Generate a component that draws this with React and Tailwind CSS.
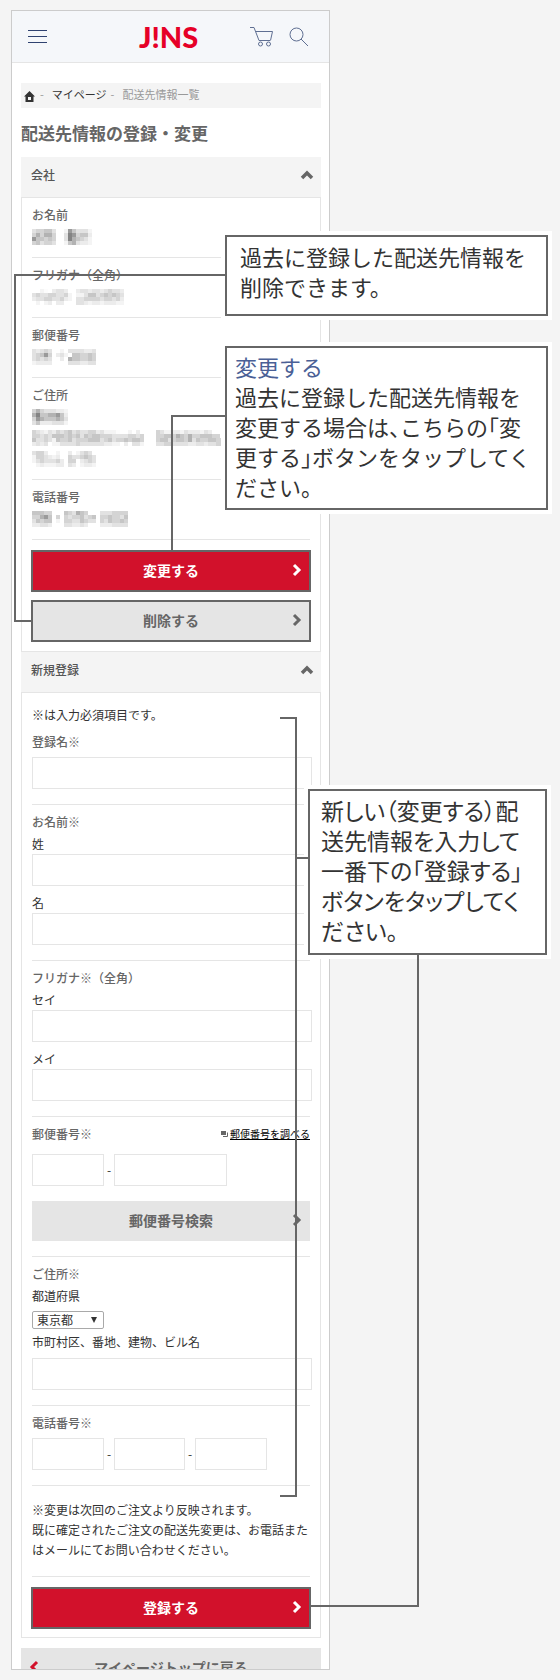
import clsx from "clsx";

// greyed-out personal data, one character per 4px block ("." is empty, 9 is darkest)
const privateRows = [
  { label: "お名前", lines: [["344553..1753331.", "464664..3874552.", "755454..3865431.", "453443..1563221."]] },
  { label: "フリガナ（全角）", lines: [["..10.2332..233233234332", "3433443341.113553454543", "2334433421.334444344342", ".1.12.22...332122122211"]] },
  { label: "郵便番号", lines: [["32343..1.3333223", "34574.231.554454", "34343..2.6554454", "12222....3332233"]] },
  {
    label: "ご住所",
    lines: [
      ["464333221", "685566752", "476555653", "352223331"],
      [
        "4321324345343344231110..1.2....43112213222132...",
        "4434355545453545544433334434...4455465464455544.",
        "5334315445344455534534454554...45534554635445544",
        "2323.11333343333332211.2.331...33443333223323344",
      ],
      ["3442..1..2.1343.", "1443212..4334543", "13433342.44.2343", ".1211122.32.1221"],
    ],
  },
  { label: "電話番号", lines: [["55544...543654...3334444", "44675.4.43445345.4454435", "35455.1.44335433.4354454", "22332...332232...2223333"]] },
];

const greys = ["#fcfcfc", "#f4f4f4", "#ececec", "#e2e2e2", "#d4d4d4", "#c6c6c6", "#b2b2b2", "#9a9a9a", "#848484", "#707070"];

function Mosaic({ rows }) {
  const cols = Math.max(...rows.map((r) => r.length));
  return (
    <svg width={cols * 4} height={16} viewBox={`0 0 ${cols * 4} 16`} shapeRendering="crispEdges" className="shrink-0" aria-hidden="true">
      {rows.map((row, y) =>
        row.split("").map((c, x) =>
          c === "." ? null : <rect key={`${x}-${y}`} x={x * 4} y={y * 4} width="4" height="4" fill={greys[c]} />
        )
      )}
    </svg>
  );
}

function Chevron({ dir = "right", className }) {
  const points = {
    right: "2,2 7,7 2,12",
    left: "8,2 3,7 8,12",
    up: "1,10 6,5 11,10",
  };
  return (
    <svg width={dir === "up" ? 14 : 10} height="14" viewBox={dir === "up" ? "-1 0 14 14" : "0 0 10 14"} className={className} aria-hidden="true">
      <polyline points={points[dir]} fill="none" stroke="currentColor" strokeWidth={dir === "up" ? 3.5 : 3} />
    </svg>
  );
}

function SectionHead({ children }) {
  return (
    <button type="button" className="flex h-10 w-full items-center justify-between bg-[#f4f4f4] pr-[7px] pb-1 pl-[10px] text-xs font-medium text-[#555]">
      {children}
      <Chevron dir="up" className="text-[#666]" />
    </button>
  );
}

function ActionButton({ red, children }) {
  return (
    <button
      type="button"
      className={clsx(
        "relative -mx-px flex h-[42px] items-center justify-center border-2 border-[#666] pb-[2px] text-sm font-bold",
        red ? "bg-[#d2112b] text-white" : "bg-[#e5e5e5] text-[#666]"
      )}
    >
      {children}
      <Chevron className={clsx("absolute right-[7px]", red ? "text-white" : "text-[#666]")} />
    </button>
  );
}

function Label({ htmlFor, children }) {
  return (
    <label htmlFor={htmlFor} className="text-xs leading-5 font-medium text-[#666]">
      {children}
    </label>
  );
}

function SubLabel({ htmlFor, className, children }) {
  return (
    <label htmlFor={htmlFor} className={clsx("pb-[2px] text-xs leading-4", className)}>
      {children}
    </label>
  );
}

function Field({ id, label, className }) {
  return <input id={id} type="text" aria-label={label} className={clsx("h-8 border border-[#e5e5e5] bg-white px-2 text-xs outline-none", className)} />;
}

function Row({ children }) {
  return <div className="flex flex-col border-b border-[#e5e5e5] pt-[7px] pb-[15px]">{children}</div>;
}

function Callout({ className, children }) {
  return (
    <div className={clsx("absolute border-2 border-[#666] bg-white leading-[30px] whitespace-nowrap ring-4 ring-white", className)}>
      {children}
    </div>
  );
}

export default function App() {
  return (
    <div className="relative w-full bg-[#f4f4f4] py-[10px] pl-[11px] font-['Noto_Sans_CJK_JP',sans-serif] text-[#333]">
      <div className="w-full max-w-[319px] border border-[#ccc] bg-white">
        <header className="flex h-[52px] items-center border-b border-[#e5e5e5] bg-[#f5f7fa] px-4">
          <button type="button" aria-label="メニュー" className="flex flex-1 flex-col gap-[5px]">
            <span className="h-px w-[19px] bg-[#2f4270]" />
            <span className="h-px w-[19px] bg-[#2f4270]" />
            <span className="h-px w-[19px] bg-[#2f4270]" />
          </button>
          <a href="#top" className="font-['Lato',sans-serif] text-[29px] leading-8 font-black text-[#e60027]">
            J!NS
          </a>
          <div className="flex flex-1 items-center justify-end gap-4 pr-1">
            <a href="#cart" aria-label="カート">
              <svg width="23" height="20" viewBox="0 0 23 20" fill="none" stroke="#5f6f92">
                <path d="M0 .5h4l5 13h11M6 4.500h16.500l-2 9" />
                <circle cx="10.500" cy="17" r="2" />
                <circle cx="18.500" cy="17" r="2" />
              </svg>
            </a>
            <a href="#search" aria-label="検索">
              <svg width="20" height="20" viewBox="0 0 20 20" fill="none" stroke="#5f6f92">
                <circle cx="7.500" cy="7.500" r="6.500" />
                <path d="M12 12l7 7" />
              </svg>
            </a>
          </div>
        </header>

        <main className="pt-5 pr-2 pl-[9px]">
          <nav className="flex h-[25px] items-center bg-[#f4f4f4] pb-[3px] pl-[3px] text-[11px] leading-4 text-[#999]">
            <a href="#home" aria-label="ホーム" className="pt-1">
              <svg width="11" height="11" viewBox="0 0 11 11" fill="#333">
                <path d="M5.500 0L11 5.500H9.500V11h-8V5.500H0zM4 6v3h3V6z" fillRule="evenodd" />
              </svg>
            </a>
            <span className="ml-[5px]">-</span>
            <a href="#mypage" className="ml-2 text-[#333]">マイページ</a>
            <span className="ml-1">-</span>
            <span className="ml-2">配送先情報一覧</span>
          </nav>

          <h1 className="mt-3 mb-3 text-[17px] leading-[25px] font-bold text-[#666]">配送先情報の登録・変更</h1>

          <section>
            <SectionHead>会社</SectionHead>
            <div className="flex flex-col border border-[#e5e5e5] px-[10px] pb-[9px]">
              <dl>
                {privateRows.map((row) => (
                  <div key={row.label} className="border-b border-[#e5e5e5] pt-[7px] pb-[10px]">
                    <dt className="text-xs leading-5 font-medium text-[#666]">{row.label}</dt>
                    <dd className="pt-px">
                      {row.lines.map((rows, i) => (
                        <div key={i} className="flex h-[21px] items-center">
                          <Mosaic rows={rows} />
                        </div>
                      ))}
                    </dd>
                  </div>
                ))}
              </dl>
              <div className="mt-[10px] flex flex-col gap-2">
                <ActionButton red>変更する</ActionButton>
                <ActionButton>削除する</ActionButton>
              </div>
            </div>
          </section>

          <section>
            <SectionHead>新規登録</SectionHead>
            <form className="flex flex-col border border-[#e5e5e5] px-[10px] pb-2">
              <p className="pt-3 text-xs leading-5">※は入力必須項目です。</p>
              <Row>
                <Label htmlFor="entry">登録名※</Label>
                <Field id="entry" className="-mr-[2px] mt-[5px]" />
              </Row>
              <Row>
                <Label htmlFor="sei">お名前※</Label>
                <SubLabel htmlFor="sei" className="mt-1">姓</SubLabel>
                <Field id="sei" className="-mr-[2px]" />
                <SubLabel htmlFor="mei" className="mt-[9px]">名</SubLabel>
                <Field id="mei" className="-mr-[2px]" />
              </Row>
              <Row>
                <Label htmlFor="sei-kana">フリガナ※（全角）</Label>
                <SubLabel htmlFor="sei-kana" className="mt-1">セイ</SubLabel>
                <Field id="sei-kana" className="-mr-[2px]" />
                <SubLabel htmlFor="mei-kana" className="mt-[9px]">メイ</SubLabel>
                <Field id="mei-kana" className="-mr-[2px]" />
              </Row>
              <Row>
                <div className="flex items-center justify-between">
                  <Label htmlFor="zip1">郵便番号※</Label>
                  <a href="#zip" className="flex items-center gap-[2px] text-[10px] leading-4 text-black">
                    <svg width="7" height="6" viewBox="0 0 7 6" aria-hidden="true">
                      <path d="M0 0h5v4H0z" fill="#666" />
                      <path d="M6.500 1.500v4H2" fill="none" stroke="#666" />
                    </svg>
                    <span className="underline">郵便番号を調べる</span>
                  </a>
                </div>
                <div className="mt-[10px] flex items-center text-xs">
                  <Field id="zip1" className="w-[72px]" />
                  <span className="w-[10px] text-center">-</span>
                  <Field id="zip2" label="郵便番号（下4桁）" className="w-[113px]" />
                </div>
                <button type="button" className="relative mt-[15px] flex h-10 items-center justify-center bg-[#e5e5e5] pb-[2px] text-sm font-bold text-[#666]">
                  郵便番号検索
                  <Chevron className="absolute right-2" />
                </button>
              </Row>
              <Row>
                <Label htmlFor="pref">ご住所※</Label>
                <SubLabel htmlFor="pref" className="mt-1">都道府県</SubLabel>
                <div className="relative mt-[5px] w-[72px]">
                  <select id="pref" className="block h-[18px] w-full appearance-none rounded-xs border border-[#a9a9a9] bg-white pl-1 text-xs leading-4">
                    <option>東京都</option>
                  </select>
                  <svg width="6" height="6" viewBox="0 0 6 6" className="absolute top-[6px] right-[7px]" aria-hidden="true">
                    <path d="M0 0h6L3 6z" fill="#333" />
                  </svg>
                </div>
                <SubLabel htmlFor="city" className="mt-[5px]">市町村区、番地、建物、ビル名</SubLabel>
                <Field id="city" className="-mr-[2px] mt-[6px]" />
              </Row>
              <Row>
                <Label htmlFor="tel1">電話番号※</Label>
                <div className="mt-[5px] flex items-center text-xs">
                  <Field id="tel1" className="w-[72px]" />
                  <span className="w-[10px] text-center">-</span>
                  <Field id="tel2" label="電話番号（市内局番）" className="w-[71px]" />
                  <span className="w-[10px] text-center">-</span>
                  <Field id="tel3" label="電話番号（加入者番号）" className="w-[72px]" />
                </div>
              </Row>
              <p className="border-b border-[#e5e5e5] pt-[14px] pb-4 text-xs leading-5">
                ※変更は次回のご注文より反映されます。
                <br />
                既に確定されたご注文の配送先変更は、お電話またはメールにてお問い合わせください。
              </p>
              <div className="mt-[10px] flex flex-col">
                <ActionButton red>登録する</ActionButton>
              </div>
            </form>
          </section>

          <div className="mt-[10px] h-[21px] overflow-hidden">
            <button type="button" className="relative flex h-10 w-full items-center justify-center bg-[#e5e5e5] pb-[2px] text-sm font-bold text-[#666]">
              <Chevron dir="left" className="absolute left-2 text-[#d2112b]" />
              マイページトップに戻る
            </button>
          </div>
        </main>
      </div>

      <Callout className="top-[235px] left-[225px] h-[81px] w-[323px] pt-1 pl-[13px] text-[22px]">
        過去に登録した配送先情報を
        <br />
        削除できます。
      </Callout>
      <Callout className="top-[346px] left-[225px] h-[164px] w-[323px] pt-[3px] pl-2 text-[22px] [font-feature-settings:'halt']">
        <span className="text-[#4a6096]">変更する</span>
        <br />
        過去に登録した配送先情報を
        <br />
        変更する場合は、こちらの「変
        <br />
        更する」ボタンをタップしてく
        <br />
        ださい。
      </Callout>
      <Callout className="top-[789px] left-[308px] h-[166px] w-[239px] pt-1 pl-[11px] text-[23px] [font-feature-settings:'palt']">
        新しい（変更する）配
        <br />
        送先情報を入力して
        <br />
        一番下の「登録する」
        <br />
        ボタンをタップしてく
        <br />
        ださい。
      </Callout>

      {/* leader lines */}
      <div className="absolute top-[274px] left-[14px] h-[346px] w-[211px] border-t-2 border-l-2 border-[#666]" />
      <div className="absolute top-[620px] left-[14px] h-[2px] w-[17px] bg-[#666]" />
      <div className="absolute top-[415px] left-[171px] h-[135px] w-[54px] border-t-2 border-l-2 border-[#666]" />
      <div className="absolute top-[717px] left-[280px] h-[780px] w-[17px] border-y-2 border-r-2 border-[#666]" />
      <div className="absolute top-[857px] left-[297px] h-[2px] w-[11px] bg-[#666]" />
      <div className="absolute top-[955px] left-[311px] h-[652px] w-[108px] border-r-2 border-b-2 border-[#666]" />
    </div>
  );
}
